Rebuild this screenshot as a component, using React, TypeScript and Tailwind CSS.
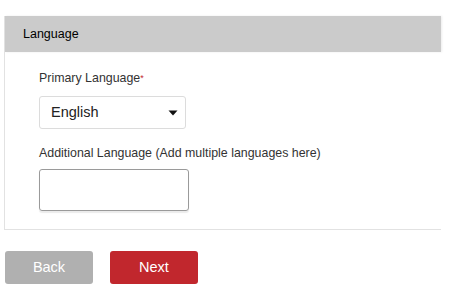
export default function App() {
  return (
    <div className="w-[472px] h-[298px] bg-white pt-4 font-['Liberation_Sans',Arial,sans-serif] text-[#222]">
      <div className="ml-1 w-[437px] border-l border-b border-[#e2e2e2]">
        <div className="h-9 bg-[#cbcbcb] pl-[18px] flex items-center text-[12.5px] text-black shadow-[1px_0_2px_rgba(0,0,0,0.08)]">
          Language
        </div>
        <div className="pl-[34px] pt-[17px] pb-[18px]">
          <div className="text-[12.4px] leading-[18px] text-[#333]">
            Primary Language<span className="text-[#c1272d] text-[9px] align-top">*</span>
          </div>
          <div className="mt-[9px] w-[147px] h-[33px] border border-[#dcdcdc] rounded-[3px] flex items-center justify-between pl-[11px] pr-[7px] text-[14.5px] text-[#222]">
            <span>English</span>
            <svg width="10" height="6" viewBox="0 0 10 6"><path d="M0.5 0.5h9L5 5.5z" fill="#111" /></svg>
          </div>
          <div className="mt-[15px] text-[12.4px] leading-[18px] text-[#333]">
            Additional Language (Add multiple languages here)
          </div>
          <div className="mt-[7px] w-[150px] h-[42px] border border-[#9a9a9a] rounded-[3px] shadow-[0_2px_1px_rgba(0,0,0,0.08)]" />
        </div>
      </div>
      <div className="flex gap-[17px] pl-[5px] mt-[21px]">
        <button className="w-[88px] h-[33px] rounded-[3px] bg-[#b0b0b0] text-white text-[14.5px]">Back</button>
        <button className="w-[88px] h-[33px] rounded-[3px] bg-[#c1272d] text-white text-[14.5px]">Next</button>
      </div>
    </div>
  );
}
